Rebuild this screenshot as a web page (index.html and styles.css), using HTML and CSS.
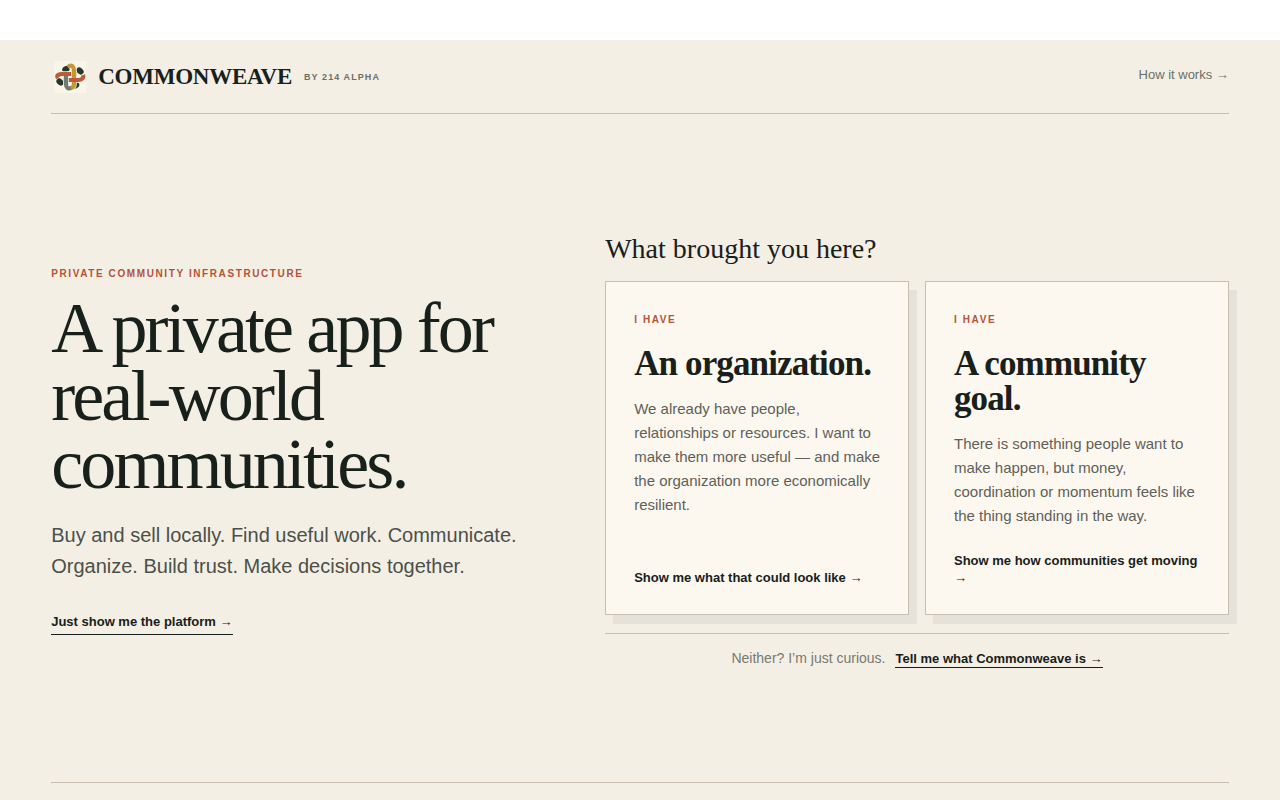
FILE: index.html
```html
<!DOCTYPE html>
<html lang="en">
<head>
  <meta charset="UTF-8" />
  <meta name="viewport" content="width=device-width, initial-scale=1" />
  <title>Commonweave</title>
  <link rel="stylesheet" href="styles.css">
</head>
<body>

<div class="page">
  <header class="site-header">
    <a class="brand" href="#">
      <svg class="brand-mark" viewBox="0 0 32 32" aria-hidden="true">
        <rect width="32" height="32" fill="#faf5e9" />
        <g fill="#25382c">
          <ellipse cx="12" cy="8.2" rx="4" ry="3" transform="rotate(-30 12 8.2)" />
          <ellipse cx="26" cy="10" rx="4" ry="3" transform="rotate(40 26 10)" />
          <ellipse cx="6" cy="21" rx="4" ry="3" transform="rotate(40 6 21)" />
          <ellipse cx="21.5" cy="24.5" rx="4" ry="3" transform="rotate(-30 21.5 24.5)" />
        </g>
        <g fill="none" stroke="#faf5e9" stroke-width="5.6">
          <path d="M14 6 C18 3 20 6 20 10 V23 C20 26 18 28 16 28" />
          <path d="M12 14 V23 C12 27 14 29 17 28" />
          <path d="M4 17 C2 14 5 13 8 13 H23" />
          <path d="M9 19 H24 C28 19 30 17 29 14" />
        </g>
        <g fill="none" stroke-width="4.2">
          <path d="M14 6 C18 3 20 6 20 10 V23 C20 26 18 27 16 27" stroke="#c59636" />
          <path d="M12 14 V23 C12 27 14 28 17 27" stroke="#6d7b70" />
          <path d="M4 17 C2 14 5 13 8 13 H23" stroke="#bd5a38" />
          <path d="M9 19 H24 C28 19 30 17 29 14" stroke="#bd5a38" />
          <path d="M20 10 V16" stroke="#faf5e9" stroke-width="5.6" />
          <path d="M20 9 V17" stroke="#c59636" />
          <path d="M12 16 V22" stroke="#faf5e9" stroke-width="5.6" />
          <path d="M12 16 V23" stroke="#6d7b70" />
        </g>
      </svg>
      <span class="brand-name">COMMONWEAVE</span>
      <span class="brand-by">By 214 Alpha</span>
    </a>
    <a class="header-link" href="#how">How it works →</a>
  </header>

  <main class="hero">
    <section class="intro">
      <p class="eyebrow">Private community infrastructure</p>
      <h1>A private app for real-world communities.</h1>
      <p class="lede">Buy and sell locally. Find useful work. Communicate. Organize. Build trust. Make decisions together.</p>
      <a class="text-link" href="#platform">Just show me the platform →</a>
    </section>

    <section class="paths">
      <h2>What brought you here?</h2>
      <div class="cards">
        <a class="card" href="#organization">
          <span class="eyebrow">I have</span>
          <h3>An organization.</h3>
          <p>We already have people, relationships or resources. I want to make them more useful — and make the organization more economically resilient.</p>
          <span class="card-cta">Show me what that could look like →</span>
        </a>
        <a class="card" href="#goal">
          <span class="eyebrow">I have</span>
          <h3>A community goal.</h3>
          <p>There is something people want to make happen, but money, coordination or momentum feels like the thing standing in the way.</p>
          <span class="card-cta">Show me how communities get moving →</span>
        </a>
      </div>
      <div class="curious">
        <span>Neither? I’m just curious.</span>
        <a class="text-link" href="#about">Tell me what Commonweave is →</a>
      </div>
    </section>
  </main>
</div>

</body>
</html>
```

FILE: styles.css
```css
* {
  box-sizing: border-box;
}

html {
  background: #fff;
}

body {
  margin: 40px 0 0;
  background: #fff;
  color: #18201c;
  font-family: "Liberation Sans", Arial, sans-serif;
}

h1,
h2,
h3,
p {
  margin: 0;
}

h1,
h2,
h3,
.brand-name {
  font-family: "Liberation Serif", "Times New Roman", serif;
}

a {
  color: inherit;
  text-decoration: none;
}

.page {
  min-height: calc(100vh - 40px);
  padding: 0 4vw 17px;
  background: #f4efe4;
}

/* Header */
.site-header {
  display: flex;
  align-items: center;
  justify-content: space-between;
  height: 74px;
  border-bottom: 1px solid #c8bfb0;
}

.brand {
  display: flex;
  align-items: center;
  gap: 12px;
}

.brand-mark {
  width: 32px;
  height: 32px;
  margin-left: 3px;
}

.brand-name {
  font-size: 23px;
  font-weight: 700;
  letter-spacing: -0.01em;
}

.brand-by {
  color: #6b6f68;
  font-size: 9px;
  font-weight: 700;
  letter-spacing: 0.12em;
  text-transform: uppercase;
}

.header-link {
  padding-bottom: 4px;
  color: #6b6f68;
  font-size: 13px;
}

/* Hero */
.hero {
  display: grid;
  grid-template-columns: 11fr 14fr;
  gap: 64px;
  align-items: center;
  min-height: calc(100vh - 131px);
  padding-top: 4px;
  border-bottom: 1px solid #c8bfb0;
}

.eyebrow {
  color: #b45338;
  font-size: 10px;
  font-weight: 700;
  line-height: 16px;
  letter-spacing: 0.16em;
  text-transform: uppercase;
}

h1 {
  margin: 12px 0 22px;
  font-size: 72px;
  font-weight: 400;
  line-height: 68px;
  letter-spacing: -0.04em;
}

.lede {
  color: #4b504a;
  font-size: 20px;
  line-height: 31px;
}

.text-link {
  display: inline-block;
  border-bottom: 1px solid #18201c;
  font-size: 13px;
  font-weight: 700;
  line-height: 16px;
}

.intro .text-link {
  margin-top: 32px;
  padding-bottom: 4px;
}

/* Choice cards */
h2 {
  margin-bottom: 16px;
  font-size: 28px;
  font-weight: 400;
  line-height: 32px;
}

.cards {
  display: grid;
  grid-template-columns: 1fr 1fr;
  gap: 16px;
}

.card {
  display: flex;
  flex-direction: column;
  min-height: 334px;
  padding: 30px 24px 28px 28px;
  border: 1px solid #c8bfb0;
  background: #fdf8ef;
  box-shadow: 8px 9px 0 #e5e2d9;
}

.card h3 {
  margin: 18px 0 16px;
  font-size: 35px;
  line-height: 35px;
  letter-spacing: -0.025em;
}

.card p {
  color: #5d615a;
  font-size: 15px;
  line-height: 24px;
}

.card-cta {
  margin-top: auto;
  font-size: 13px;
  font-weight: 700;
  line-height: 17px;
}

.curious {
  display: flex;
  align-items: baseline;
  justify-content: center;
  gap: 10px;
  margin-top: 18px;
  padding-top: 16px;
  border-top: 1px solid #c8bfb0;
  color: #777a72;
  font-size: 14px;
}

.curious .text-link {
  color: #18201c;
}

@media (max-width: 900px) {
  .hero {
    grid-template-columns: 1fr;
    padding: 48px 0;
  }
}

@media (max-width: 600px) {
  .cards {
    grid-template-columns: 1fr;
  }

  h1 {
    font-size: 48px;
    line-height: 46px;
  }
}
```
